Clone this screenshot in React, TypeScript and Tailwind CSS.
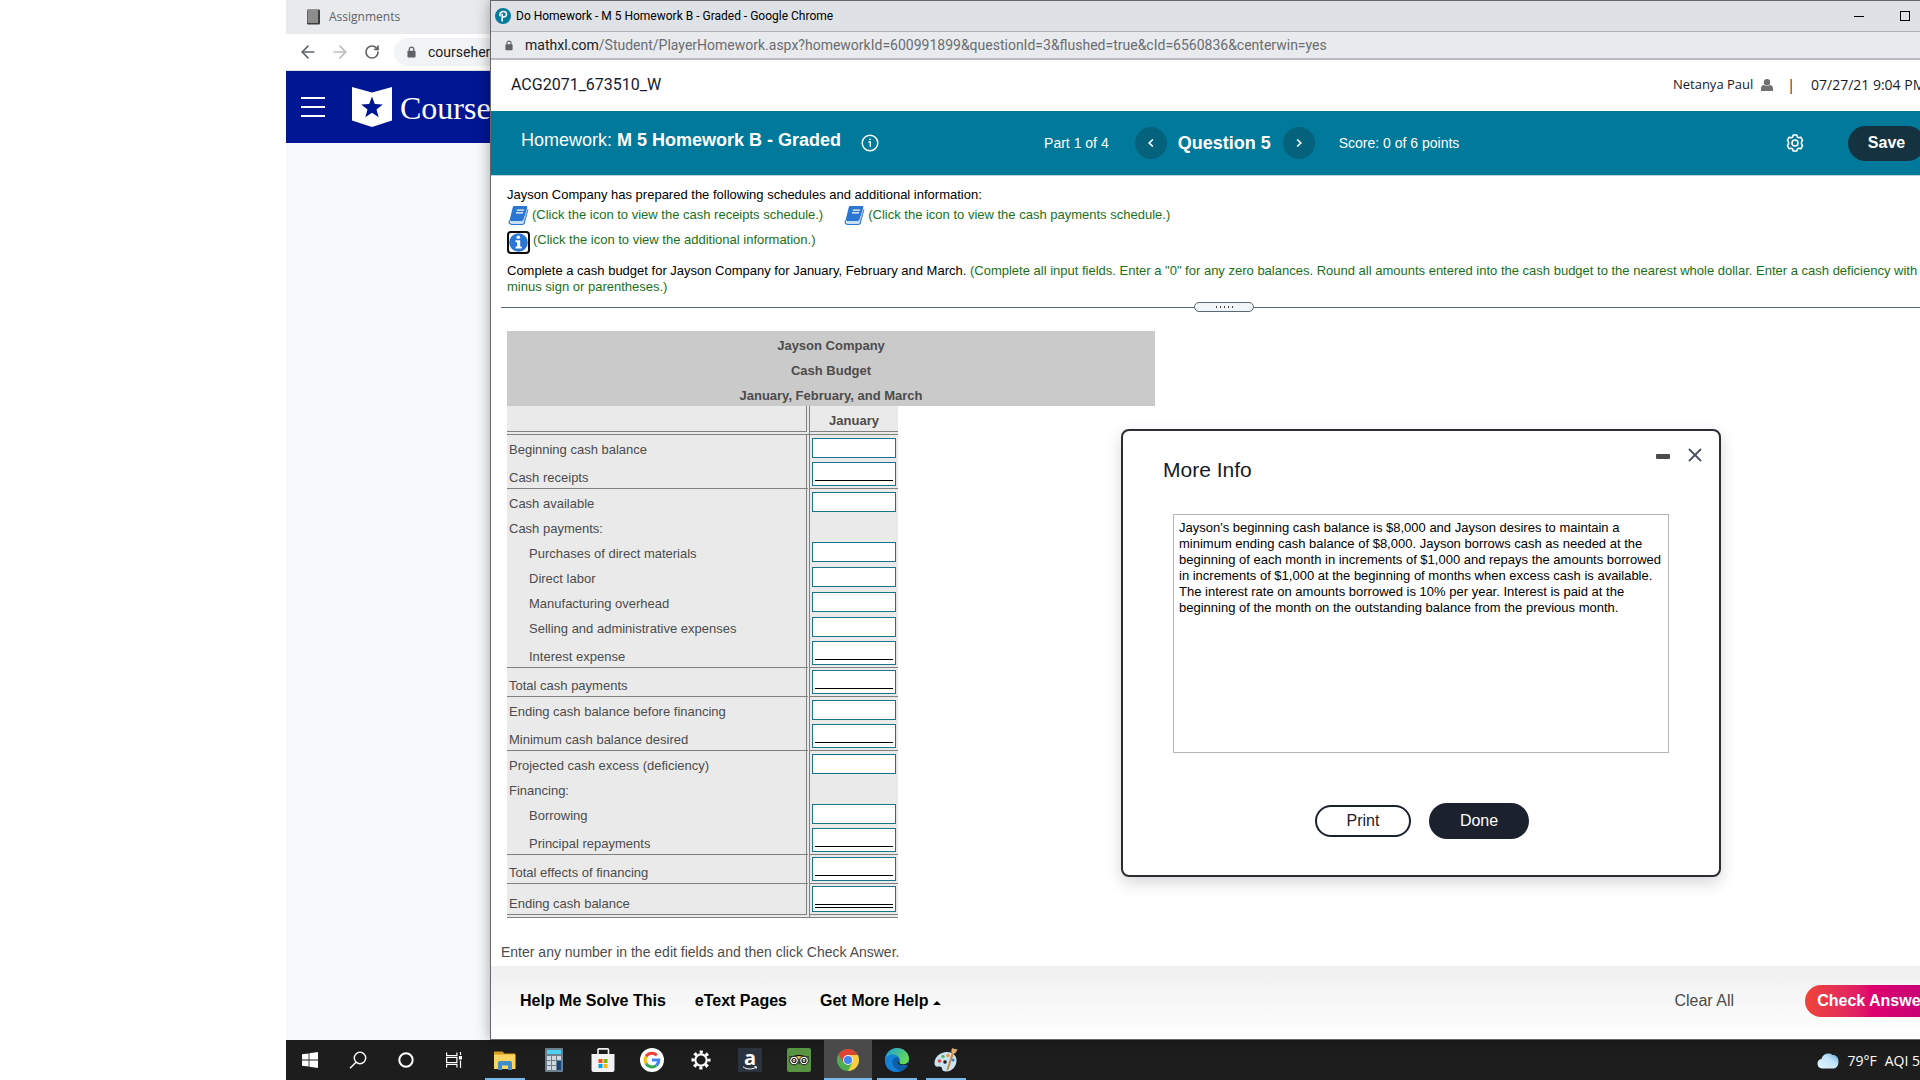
import React from 'react';
import { clsx } from 'clsx';
import { ArrowLeft, ArrowRight, RotateCw, X } from 'lucide-react';

interface IconProps {
  className?: string;
}

interface BudgetRow {
  label: string;
  indent?: boolean;
  kind: 'plain' | 'heading' | 'ruled' | 'total';
}

const ROWS: BudgetRow[] = [
  { label: 'Beginning cash balance', kind: 'plain' },
  { label: 'Cash receipts', kind: 'ruled' },
  { label: 'Cash available', kind: 'plain' },
  { label: 'Cash payments:', kind: 'heading' },
  { label: 'Purchases of direct materials', indent: true, kind: 'plain' },
  { label: 'Direct labor', indent: true, kind: 'plain' },
  { label: 'Manufacturing overhead', indent: true, kind: 'plain' },
  { label: 'Selling and administrative expenses', indent: true, kind: 'plain' },
  { label: 'Interest expense', indent: true, kind: 'ruled' },
  { label: 'Total cash payments', kind: 'ruled' },
  { label: 'Ending cash balance before financing', kind: 'plain' },
  { label: 'Minimum cash balance desired', kind: 'ruled' },
  { label: 'Projected cash excess (deficiency)', kind: 'plain' },
  { label: 'Financing:', kind: 'heading' },
  { label: 'Borrowing', indent: true, kind: 'plain' },
  { label: 'Principal repayments', indent: true, kind: 'ruled' },
  { label: 'Total effects of financing', kind: 'ruled' },
  { label: 'Ending cash balance', kind: 'total' },
];

const PadlockIcon = ({ className }: IconProps) => (
  <svg viewBox="0 0 10 13" className={className} fill="none">
    <path d="M2.5 6V3.5a2.5 2.5 0 0 1 5 0V6" stroke="#5f6368" strokeWidth="1.4" />
    <rect x="0.5" y="5" width="9" height="7.5" rx="1" fill="#5f6368" />
  </svg>
);

const PearsonIcon = () => (
  <svg viewBox="0 0 16 16" className="size-4" fill="none">
    <circle cx="8" cy="8" r="8" fill="#047a9c" />
    <path d="M7.2 13V6.2M5 7.6C4.4 5 6.4 3.4 8.4 3.5c2 .1 3.2 1.300 3.100 2.900-.1 1.700-1.500 2.700-3.300 2.500" stroke="#fff" strokeWidth="1.600" strokeLinecap="round" />
  </svg>
);

const CourseHeroShield = () => (
  <svg viewBox="0 0 40 40" className="h-10 w-10">
    <path d="M0 0l20 5.500L40 0v33.500L20 40 0 33.500z" fill="#fff" />
    <path d="M20 9.500l2.800 7.600 8 .3-6.300 5 2.200 7.800-6.700-4.500-6.700 4.500 2.200-7.800-6.300-5 8-.3z" fill="#001693" />
  </svg>
);

const BookIcon = () => (
  <svg viewBox="0 0 22 20" className="h-[19px] w-[22px]">
    <path d="M7 0h12.500c1 0 1.500.7 1.200 1.600L16.800 14.500c-.2.700-.8 1.200-1.600 1.200H4.600L2 15.500 5.500 1.200C5.700.4 6.200 0 7 0z" fill="#2a76d2" />
    <path d="M2 15.500c-.5 2 .2 3.800 2.200 3.800h11.300c1 0 1.700-.5 2-1.400L21.300 3.500" fill="none" stroke="#2a76d2" strokeWidth="1.400" />
    <path d="M3.500 16.800h12.200c1 0 1.600-.5 1.900-1.300L20.900 3" fill="none" stroke="#8db8ec" strokeWidth="1" />
    <path d="M9.700 4.300h7.500M8.900 7.300h7.500" stroke="#fff" strokeWidth="1.300" />
  </svg>
);

const InfoBadge = () => (
  <svg viewBox="0 0 23 23" className="size-[23px]">
    <rect x="1" y="1" width="21" height="21" rx="3" fill="#fff" stroke="#0b0b0b" strokeWidth="2" />
    <circle cx="11.500" cy="11.500" r="9.300" fill="#2a76d2" />
    <circle cx="11.300" cy="6.300" r="1.800" fill="#fff" />
    <path d="M8.500 9.200h4.700v6.300h1.500v2H8.500v-2h1.700v-4.300H8.500z" fill="#fff" />
  </svg>
);

const InfoOutline = () => (
  <svg viewBox="0 0 18 18" className="size-[18px]" fill="none" stroke="#fff">
    <circle cx="9" cy="9" r="7.800" strokeWidth="1.500" />
    <path d="M7.400 8h1.900v4.700" strokeWidth="1.300" />
    <circle cx="9" cy="5.300" r="0.500" fill="#fff" strokeWidth="0.800" />
  </svg>
);

const Chevron = ({ flip }: { flip?: boolean }) => (
  <svg viewBox="0 0 8 10" className={clsx('h-[10px] w-2', flip && 'rotate-180')} fill="none">
    <path d="M5.800 1.500L2.200 5l3.600 3.500" stroke="#fff" strokeWidth="1.700" />
  </svg>
);

const SettingsIcon = () => (
  <svg viewBox="0 0 18 18" className="size-[18px]" fill="none" stroke="#fff" strokeWidth="1.600">
    <path d="M7.200 1h3.600l.6 2.100 1.300.7 2.100-.6 1.800 3.100-1.100 1.600v2.200l1.100 1.600-1.800 3.100-2.100-.6-1.300.7-.6 2.100H7.200l-.6-2.100-1.300-.7-2.100.6-1.800-3.100 1.100-1.600V7.900L1.400 6.300l1.800-3.100 2.100.6 1.300-.7z" strokeLinejoin="round" />
    <circle cx="9" cy="9" r="3" />
  </svg>
);

const PersonIcon = () => (
  <svg viewBox="0 0 12 12" className="size-3" fill="#707070">
    <circle cx="6" cy="3.200" r="3.200" />
    <path d="M0 12V9.200C0 7.300 1.400 6 3 6c1.700 1.300 4.300 1.300 6 0 1.600 0 3 1.300 3 3.200V12z" />
  </svg>
);

const TaskIcons = {
  windows: (
    <svg viewBox="0 0 16 16" className="size-4" fill="#fff">
      <path d="M0 2.300l6.600-.9v6.200H0zM7.400 1.300L16 0v7.600H7.400zM0 8.400h6.600v6.200L0 13.700zM7.400 8.400H16V16l-8.600-1.300z" />
    </svg>
  ),
  search: (
    <svg viewBox="0 0 18 18" className="size-[18px]" fill="none" stroke="#fff" strokeWidth="1.400">
      <circle cx="11" cy="7" r="5.700" />
      <path d="M7 11.200L1 17.200" />
    </svg>
  ),
  cortana: (
    <svg viewBox="0 0 16 16" className="size-4" fill="none" stroke="#fff" strokeWidth="2">
      <circle cx="8" cy="8" r="6.700" />
    </svg>
  ),
  taskView: (
    <svg viewBox="0 0 16 16" className="size-4" fill="none" stroke="#fff" strokeWidth="1.200">
      <path d="M.6.500v3.100h10.300V.5M.6 15.500v-3.100h10.300v3.100M.6 5.500h10.300v5H.6zM14.500 0v3M14.500 8.500V16" />
      <path d="M13.500 4.500h2v2.500h-2z" fill="#fff" />
    </svg>
  ),
  explorer: (
    <svg viewBox="0 0 24 24" className="size-6">
      <path d="M1 3.500h8.500l2 2H22v4H1z" fill="#d99c1c" />
      <path d="M1 6.500h21.500v14.500H1z" fill="#fcd462" />
      <path d="M5 22v-7.500A2 2 0 0 1 7 13h10.500a2 2 0 0 1 1.500 2v7h-4v-4.500H9V22z" fill="#3f8ec9" />
    </svg>
  ),
  calculator: (
    <svg viewBox="0 0 18 24" className="h-6 w-[18px]">
      <rect width="18" height="24" rx="1" fill="#6c7f8e" />
      <rect x="2" y="2" width="14" height="4" fill="#4fd0f0" />
      <path d="M2 8h4v4H2zM7 8h4v4H7zM12 8h4v4h-4zM2 13h4v4H2zM7 13h4v4H7zM2 18h4v4H2zM7 18h4v4H7z" fill="#cfd7dd" />
      <path d="M12 13h4v9h-4z" fill="#15437a" />
    </svg>
  ),
  store: (
    <svg viewBox="0 0 24 24" className="size-6">
      <path d="M7 7V1.800C7 1.200 7.300.9 8 .9h8.500c.6 0 1 .4 1 .9V7" fill="none" stroke="#f2f2f2" strokeWidth="1.600" />
      <path d="M.5 6h23v16a2 2 0 0 1-2 2h-19a2 2 0 0 1-2-2z" fill="#f2f2f2" />
      <path d="M7.500 11h4v4h-4z" fill="#f25022" />
      <path d="M12.500 11h4v4h-4z" fill="#7fba00" />
      <path d="M7.500 16h4v4h-4z" fill="#00a4ef" />
      <path d="M12.500 16h4v4h-4z" fill="#ffb900" />
    </svg>
  ),
  google: (
    <svg viewBox="0 0 24 24" className="size-6" fill="none" strokeWidth="3">
      <circle cx="12" cy="12" r="12" fill="#fff" />
      <path d="M6.100 8.600A6.800 6.800 0 0 1 16.800 7.200" stroke="#ea4335" />
      <path d="M6.100 8.600a6.800 6.800 0 0 0 0 6.800" stroke="#fbbc05" />
      <path d="M6.100 15.400a6.800 6.800 0 0 0 10.200 2" stroke="#34a853" />
      <path d="M16.300 17.400c1.600-1.300 2.500-3.100 2.500-5.400H12" stroke="#4285f4" />
    </svg>
  ),
  settings: (
    <svg viewBox="0 0 20 20" className="size-5" fill="none" stroke="#fff">
      <circle cx="10" cy="10" r="5.700" strokeWidth="2.200" />
      <circle cx="10" cy="10" r="8" strokeWidth="3" strokeDasharray="3.140 3.140" strokeDashoffset="1.570" />
    </svg>
  ),
  tripadvisor: (
    <svg viewBox="0 0 24 24" className="size-6" fill="none">
      <rect width="24" height="24" rx="2" fill="#589442" />
      <path d="M5 8.500c4-2 10-2 14 0l-3 3H8z" fill="#e8c34c" />
      <path d="M2 9h3.500c4-2 9-2 13 0H22" stroke="#111" strokeWidth="1.200" />
      <circle cx="7" cy="12.500" r="4.300" fill="#fff" stroke="#111" strokeWidth="1" />
      <circle cx="17" cy="12.500" r="4.300" fill="#fff" stroke="#111" strokeWidth="1" />
      <circle cx="7" cy="12.500" r="2" stroke="#111" strokeWidth="1.200" />
      <circle cx="17" cy="12.500" r="2" stroke="#111" strokeWidth="1.200" />
      <circle cx="7" cy="12.500" r="0.800" fill="#d34b3c" />
      <circle cx="17" cy="12.500" r="0.800" fill="#3c8f4b" />
      <path d="M11 14.500h2l-1 2z" fill="#111" />
    </svg>
  ),
  chrome: (
    <svg viewBox="0 0 24 24" className="size-6">
      <circle cx="12" cy="12" r="11" fill="#4caf50" />
      <path d="M12 12L2.500 6.500A11 11 0 0 1 21.500 6.500z" fill="#db4437" />
      <path d="M12 7h9.800A11 11 0 0 1 12 23l4.500-8.500z" fill="#ffcd40" />
      <path d="M2.500 6.500L12 7l-4.500 8z" fill="#db4437" />
      <circle cx="12" cy="12" r="5" fill="#f1f1f1" />
      <circle cx="12" cy="12" r="4" fill="#4285f4" />
    </svg>
  ),
  edge: (
    <svg viewBox="0 0 24 24" className="size-6">
      <defs>
        <linearGradient id="edgeTop" x1="0" y1="0" x2="1" y2="0.500">
          <stop offset="0" stopColor="#1b9de2" />
          <stop offset="1" stopColor="#63d957" />
        </linearGradient>
      </defs>
      <circle cx="12" cy="12" r="12" fill="#0f5ea8" />
      <path d="M0 12C.5 5 5.500 0 12 0s12 5 12 10.500c0 4-3 6-6 6-2.500 0-4-1-3.500-2.300 1-2.700-.5-6.200-5-6.200C5 8 1 9.500 0 12z" fill="url(#edgeTop)" />
      <path d="M0 12c.5-3.500 4-5.500 8-5.500 3 0 5.500 1.500 6 3-4-1.500-7.500 2-6.500 6 .8 3.500 4 6.500 8 7.500-7 3-16-2-15.500-11z" fill="#1581d6" />
      <path d="M14.500 14.200c-.5 1.300 1 2.300 3.500 2.300 1.800 0 3.600-.7 4.800-2l1.200 2.500h-7c-2 0-4.500-1-4.500-3.500z" fill="#1d1d1d" />
    </svg>
  ),
  paint: (
    <svg viewBox="0 0 24 24" className="size-6">
      <path d="M13 4C6 4 .5 9 .5 15c0 3.500 2 4 4 3.500 2-.4 3.500.3 3.500 2 0 2 1.500 3 4 3 6 0 10.500-5 10.500-11C22.500 7 18 4 13 4z" fill="#cbe4f2" />
      <circle cx="5.500" cy="13" r="1.800" fill="#e14b3f" />
      <circle cx="9" cy="8.500" r="1.700" fill="#5bb75b" />
      <circle cx="14" cy="7.500" r="1.700" fill="#f2913c" />
      <circle cx="19" cy="12" r="1.600" fill="#3a7fd0" />
      <circle cx="11" cy="14" r="1.800" fill="#1d1d1d" />
      <path d="M20 5L14.500 21.500 12.500 23l.5-3L18 4.500z" fill="#c98a45" />
      <path d="M18 5c-1.500-2 0-4.500.5-5 1 1 3.500 1.500 5 1-.5 2-1.500 4-3.500 4.800z" fill="#dfae78" />
    </svg>
  ),
};

const TaskButton = ({ label, open, active, children }: { label: string; open?: boolean; active?: boolean; children: React.ReactNode }) => (
  <button
    aria-label={label}
    className={clsx('relative flex h-10 w-12 items-center justify-center', active && 'bg-[#4a4a4a]')}
  >
    {children}
    {open && <span className={clsx('absolute bottom-0 h-[2px] bg-[#76b9ed]', active ? 'inset-x-0' : 'inset-x-1')} />}
  </button>
);

const Taskbar = () => (
  <footer className="flex h-10 shrink-0 items-center bg-[#1d1d1d] text-white">
    <TaskButton label="Start">{TaskIcons.windows}</TaskButton>
    <TaskButton label="Search">{TaskIcons.search}</TaskButton>
    <TaskButton label="Cortana">{TaskIcons.cortana}</TaskButton>
    <TaskButton label="Task View">{TaskIcons.taskView}</TaskButton>
    <div className="ml-[3px] flex gap-px">
      <TaskButton label="File Explorer" open>{TaskIcons.explorer}</TaskButton>
      <TaskButton label="Calculator">{TaskIcons.calculator}</TaskButton>
      <TaskButton label="Microsoft Store">{TaskIcons.store}</TaskButton>
      <TaskButton label="Google">{TaskIcons.google}</TaskButton>
      <TaskButton label="Settings">{TaskIcons.settings}</TaskButton>
      <TaskButton label="Amazon">
        <span className="flex size-6 flex-col items-center justify-center bg-[#2b3340]">
          <span className="font-['Open_Sans',sans-serif] text-xl leading-4 font-bold">a</span>
          <svg viewBox="0 0 16 4" className="h-1 w-4" fill="none" stroke="#fff">
            <path d="M1 .8c4 2.800 9.500 2.800 13 .4M12.300.6l2.300.2-.6 2" />
          </svg>
        </span>
      </TaskButton>
      <TaskButton label="Tripadvisor">{TaskIcons.tripadvisor}</TaskButton>
      <TaskButton label="Google Chrome" open active>{TaskIcons.chrome}</TaskButton>
      <TaskButton label="Microsoft Edge" open>{TaskIcons.edge}</TaskButton>
      <TaskButton label="Paint" open>{TaskIcons.paint}</TaskButton>
    </div>
    <div className="ml-auto flex items-center gap-2 pt-px font-['Open_Sans',sans-serif] text-sm whitespace-nowrap">
      <svg viewBox="0 0 22 16" className="h-4 w-[22px]">
        <defs>
          <linearGradient id="cloud" x1="0" y1="1" x2="1" y2="0">
            <stop offset="0" stopColor="#e8f6ff" />
            <stop offset="0.600" stopColor="#bfe3f8" />
            <stop offset="1" stopColor="#5aa9e0" />
          </linearGradient>
        </defs>
        <path d="M5 15.500a4.800 4.800 0 0 1-.6-9.500C5.500 2.300 8.500.5 11.500.5c1.600 0 3 .5 4 1.500 3.500-.2 6 2.500 6 6.500s-2 7-5 7z" fill="url(#cloud)" />
      </svg>
      <span>79°F</span>
      <span>AQI 5</span>
    </div>
  </footer>
);

const BackgroundBrowser = () => (
  <section className="flex w-[204px] shrink-0 flex-col overflow-hidden bg-[#f8f9fb] font-['Open_Sans',sans-serif] whitespace-nowrap">
    <div className="flex h-[34px] items-center gap-2 bg-[#e8eaed] pl-5 text-xs text-[#5f6368]">
      <svg viewBox="0 0 15 16" className="h-4 w-[15px]">
        <rect x="1" y="0.500" width="13" height="15" rx="1" fill="#3d3d3d" />
        <rect x="1.500" y="1" width="10.500" height="13" fill="#8c8c8c" />
      </svg>
      <span>Assignments</span>
    </div>
    <div className="flex h-9 items-center bg-white pl-3">
      <button aria-label="Back"><ArrowLeft size={20} color="#5f6368" /></button>
      <button aria-label="Forward" className="ml-3"><ArrowRight size={20} color="#babcbe" /></button>
      <button aria-label="Reload" className="ml-[14px]"><RotateCw size={16} color="#5f6368" strokeWidth={2.5} /></button>
      <div className="ml-[14px] flex h-7 w-40 shrink-0 items-center gap-3 rounded-l-full bg-[#f1f3f4] pl-[13px]">
        <PadlockIcon className="h-3 w-[9px]" />
        <span className="font-[Roboto,sans-serif] text-sm text-[#202124]">coursehero</span>
      </div>
    </div>
    <div className="flex h-[73px] items-center border-t border-[#dadce0] bg-[#001693] pl-[15px]">
      <button aria-label="Menu" className="flex w-6 shrink-0 flex-col gap-[7px]">
        <span className="h-[2px] bg-white" />
        <span className="h-[2px] bg-white" />
        <span className="h-[2px] bg-white" />
      </button>
      <a href="#home" className="ml-[27px] flex items-center gap-2">
        <CourseHeroShield />
        <span className="pt-[2px] font-['Liberation_Serif',serif] text-[32px] leading-10 text-white">Course</span>
      </a>
    </div>
  </section>
);

const WindowChrome = () => (
  <div className="font-[Roboto,sans-serif]">
    <div className="flex h-[31px] items-center border-b border-[#adb0b5] bg-[#dee1e6] pr-[41px] pl-1 text-xs text-black">
      <PearsonIcon />
      <span className="ml-[5px]">Do Homework - M 5 Homework B - Graded - Google Chrome</span>
      <button aria-label="Minimize" className="ml-auto p-1"><span className="block h-px w-[10px] bg-black" /></button>
      <button aria-label="Maximize" className="ml-7 p-1"><span className="block size-[10px] border border-black" /></button>
    </div>
    <div className="flex h-7 items-center gap-3 border-b-2 border-[#b9bbbe] bg-[#e8eaed] pl-[14px] text-sm text-[#6a6d71]">
      <PadlockIcon className="h-[11px] w-2" />
      <span>
        <span className="text-[#202124]">mathxl.com</span>
        /Student/PlayerHomework.aspx?homeworkId=600991899&amp;questionId=3&amp;flushed=true&amp;cId=6560836&amp;centerwin=yes
      </span>
    </div>
  </div>
);

const PageHeader = () => (
  <header>
    <div className="flex h-[51px] items-center pb-[2px] pl-5 font-['Open_Sans',sans-serif] whitespace-nowrap text-[#151a2b]">
      <span className="font-[Roboto,sans-serif]">ACG2071_673510_W</span>
      <span className="ml-auto text-[13px]">Netanya Paul</span>
      <span className="ml-2"><PersonIcon /></span>
      <span className="ml-[14px] text-sm">|</span>
      <span className="ml-4 w-[144px] text-sm">07/27/21 9:04 PM</span>
    </div>
    <div className="flex h-[65px] items-center border-b border-[#b5d5de] bg-[#00799b] pl-[30px] whitespace-nowrap text-white">
      <h1 className="pb-[6px] text-lg">
        Homework: <b>M 5 Homework B - Graded</b>
      </h1>
      <button aria-label="Assignment info" className="ml-5"><InfoOutline /></button>
      <span className="ml-[165px] text-sm">Part 1 of 4</span>
      <button aria-label="Previous question" className="ml-[26px] flex size-8 items-center justify-center rounded-full bg-[#05627d]">
        <Chevron />
      </button>
      <b className="ml-[11px] text-lg">Question 5</b>
      <button aria-label="Next question" className="ml-3 flex size-8 items-center justify-center rounded-full bg-[#05627d]">
        <Chevron flip />
      </button>
      <span className="ml-6 text-sm">Score: 0 of 6 points</span>
      <button aria-label="Settings" className="ml-auto"><SettingsIcon /></button>
      <button className="mr-[30px] ml-11 h-[35px] w-[77px] rounded-full bg-[#143240] font-bold">Save</button>
    </div>
  </header>
);

const Problem = () => (
  <div className="pt-[10px] pl-4 text-[13px] leading-4 text-black">
    <p className="pt-px">Jayson Company has prepared the following schedules and additional information:</p>
    <div className="mt-[3px] flex gap-5 text-[#1a701a]">
      <a href="#receipts" className="flex gap-[3px]">
        <BookIcon />
        <span className="pt-px">(Click the icon to view the cash receipts schedule.)</span>
      </a>
      <a href="#payments" className="flex gap-[3px]">
        <BookIcon />
        <span className="pt-px">(Click the icon to view the cash payments schedule.)</span>
      </a>
    </div>
    <a href="#info" className="mt-[6px] flex gap-[3px] text-[#1a701a]">
      <InfoBadge />
      <span className="pt-px">(Click the icon to view the additional information.)</span>
    </a>
    <p className="mt-[9px] whitespace-nowrap">
      Complete a cash budget for Jayson Company for January, February and March.{' '}
      <span className="text-[#1a701a]">
        (Complete all input fields. Enter a "0" for any zero balances. Round all amounts entered into the cash budget to the nearest whole dollar. Enter a cash deficiency with
        <br />
        minus sign or parentheses.)
      </span>
    </p>
  </div>
);

const Splitter = () => (
  <div className="mr-2 ml-[10px] mt-[7px] flex h-[10px] items-center">
    <span className="h-px flex-1 bg-[#5c6a75]" />
    <button aria-label="Resize panes" className="flex h-[10px] w-[60px] items-center justify-center gap-[3px] rounded-full border border-[#5c6a75] bg-[#f3f6f8]">
      {[0, 1, 2, 3, 4].map((dot) => (
        <span key={dot} className="h-[2px] w-px bg-[#444]" />
      ))}
    </button>
    <span className="h-px flex-1 bg-[#5c6a75]" />
  </div>
);

const BudgetTable = () => (
  <div className="mt-[19px] ml-4 w-[648px] text-[13px] leading-4 text-[#4c4c4c]">
    <div className="h-[75px] bg-[#cacaca] pt-[2px] text-center leading-[25px] font-bold">
      <p>Jayson Company</p>
      <p>Cash Budget</p>
      <p>January, February, and March</p>
    </div>
    <table className="border-separate border-spacing-0 bg-[#eaeaea]">
      <thead>
        <tr className="h-[29px]">
          <th className="w-[303px] border-r-4 border-b-4 border-double border-[#808080] p-0" />
          <th className="w-[88px] border-b-4 border-double border-[#808080] p-0 pt-1 align-middle">January</th>
        </tr>
      </thead>
      <tbody>
        {ROWS.map(({ label, indent, kind }, i) => (
          <tr
            key={label}
            className={clsx(
              (kind === 'plain' || kind === 'heading') && 'h-[25px]',
              kind === 'ruled' && 'h-[29px]',
              kind === 'total' && 'h-[34px]',
            )}
          >
            <td
              className={clsx(
                'border-[#808080] p-0 pb-[2px] align-bottom [border-right:4px_double_#808080]',
                indent ? 'pl-[22px]' : 'pl-[2px]',
                kind === 'ruled' && '[border-bottom:1px_solid_#808080]',
                kind === 'total' && '[border-bottom:4px_double_#808080]',
              )}
            >
              <label htmlFor={`cell-${i}`}>{label}</label>
            </td>
            <td
              className={clsx(
                'px-[2px] pt-0 pb-[2px] align-bottom',
                kind === 'ruled' && '[border-bottom:1px_solid_#808080]',
                kind === 'total' && '[border-bottom:4px_double_#808080]',
              )}
            >
              {kind !== 'heading' && (
                <div
                  className={clsx(
                    'border border-[#1b7390] bg-white',
                    kind === 'plain' && 'h-5',
                    kind === 'ruled' && 'h-6 px-[2px] pb-1',
                    kind === 'total' && 'h-[26px] px-[2px] pb-[3px]',
                  )}
                >
                  <input
                    id={`cell-${i}`}
                    type="text"
                    className={clsx(
                      'block h-full w-full bg-transparent text-right outline-none',
                      kind === 'ruled' && 'border-b border-black',
                      kind === 'total' && 'border-b-4 border-double border-black',
                    )}
                  />
                </div>
              )}
            </td>
          </tr>
        ))}
      </tbody>
    </table>
  </div>
);

const MoreInfoDialog = () => (
  <div
    role="dialog"
    aria-label="More Info"
    className="absolute top-[428px] left-[630px] flex h-[448px] w-[600px] flex-col rounded-lg border-2 border-[#2c2d33] bg-white shadow-[0_6px_16px_rgba(0,0,0,0.16)]"
  >
    <div className="flex h-[52px] items-start pt-[13px] pr-[13px] pl-10 text-[#151a2b]">
      <h2 className="mt-3 text-[21px] leading-7">More Info</h2>
      <button aria-label="Collapse" className="mt-[10px] ml-auto"><span className="block h-[5px] w-[14px] rounded-[1px] bg-[#4c4c4c]" /></button>
      <button aria-label="Close" className="ml-[14px]"><X size={22} strokeWidth={2} color="#4a5260" /></button>
    </div>
    <p className="mx-auto mt-[31px] h-[239px] w-[496px] border border-[#b5b5b5] p-[5px] text-[13px] leading-4 whitespace-nowrap text-black">
      Jayson's beginning cash balance is $8,000 and Jayson desires to maintain a<br />
      minimum ending cash balance of $8,000. Jayson borrows cash as needed at the<br />
      beginning of each month in increments of $1,000 and repays the amounts borrowed<br />
      in increments of $1,000 at the beginning of months when excess cash is available.<br />
      The interest rate on amounts borrowed is 10% per year. Interest is paid at the<br />
      beginning of the month on the outstanding balance from the previous month.
    </p>
    <div className="mt-[50px] flex items-center justify-center gap-[18px] pl-[2px]">
      <button className="h-8 w-24 rounded-full border-2 border-[#1b212d] text-[#1b212d]">Print</button>
      <button className="h-9 w-[100px] rounded-full bg-[#1b212d] text-white">Done</button>
    </div>
  </div>
);

const ActionBar = () => (
  <div className="flex h-[73px] items-center bg-linear-to-b from-[#f0f0f0] to-white pb-1 pl-[29px] whitespace-nowrap text-black">
    <button className="font-bold">Help Me Solve This</button>
    <button className="ml-[29px] font-bold">eText Pages</button>
    <button className="ml-[33px] flex items-center gap-[5px] font-bold">
      Get More Help
      <svg viewBox="0 0 8 4" className="mt-1 h-1 w-2"><path d="M0 4l4-4 4 4z" /></svg>
    </button>
    <button className="ml-auto text-[#4c4c4c]">Clear All</button>
    <button className="mr-4 ml-[71px] h-8 w-[134px] rounded-full bg-linear-to-r from-[#ee4536] via-[#de006e] to-[#c0007a] font-bold text-white">
      Check Answer
    </button>
  </div>
);

export default function App() {
  return (
    <div className="flex min-h-screen flex-col overflow-hidden bg-white pl-[286px] font-['Liberation_Sans',Arial,sans-serif]">
      <div className="flex flex-1">
        <BackgroundBrowser />
        <main className="relative -mr-9 flex min-w-0 flex-1 flex-col border border-[#66666b] bg-white shadow-[0_0_14px_rgba(0,0,0,0.35)]">
          <WindowChrome />
          <PageHeader />
          <Problem />
          <Splitter />
          <BudgetTable />
          <p className="mt-auto mb-1 pl-[10px] text-sm text-[#4c4c4c]">
            Enter any number in the edit fields and then click Check Answer.
          </p>
          <ActionBar />
          <MoreInfoDialog />
        </main>
      </div>
      <Taskbar />
    </div>
  );
}
